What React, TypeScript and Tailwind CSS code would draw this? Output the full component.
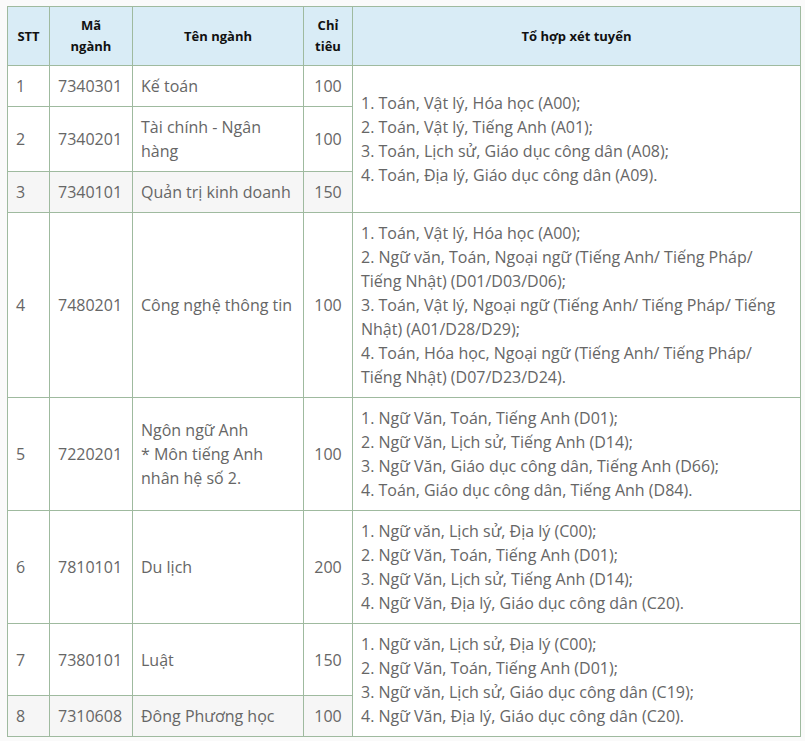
const rows = [
  { stt: "1", ma: "7340301", ten: ["Kế toán"], ct: "100" },
  { stt: "2", ma: "7340201", ten: ["Tài chính - Ngân hàng"], ct: "100" },
  { stt: "3", ma: "7340101", ten: ["Quản trị kinh doanh"], ct: "150", striped: true },
  { stt: "4", ma: "7480201", ten: ["Công nghệ thông tin"], ct: "100" },
  { stt: "5", ma: "7220201", ten: ["Ngôn ngữ Anh", "* Môn tiếng Anh nhân hệ số 2."], ct: "100" },
  { stt: "6", ma: "7810101", ten: ["Du lịch"], ct: "200" },
  { stt: "7", ma: "7380101", ten: ["Luật"], ct: "150", tall: true },
  { stt: "8", ma: "7310608", ten: ["Đông Phương học"], ct: "100", striped: true },
];

// tổ hợp: key = row index where the merged cell starts
const toHop: Record<number, { span: number; lines: string[] }> = {
  0: {
    span: 3,
    lines: [
      "1. Toán, Vật lý, Hóa học (A00);",
      "2. Toán, Vật lý, Tiếng Anh (A01);",
      "3. Toán, Lịch sử, Giáo dục công dân (A08);",
      "4. Toán, Địa lý, Giáo dục công dân (A09).",
    ],
  },
  3: {
    span: 1,
    lines: [
      "1. Toán, Vật lý, Hóa học (A00);",
      "2. Ngữ văn, Toán, Ngoại ngữ (Tiếng Anh/ Tiếng Pháp/ Tiếng Nhật) (D01/D03/D06);",
      "3. Toán, Vật lý, Ngoại ngữ (Tiếng Anh/ Tiếng Pháp/ Tiếng Nhật) (A01/D28/D29);",
      "4. Toán, Hóa học, Ngoại ngữ (Tiếng Anh/ Tiếng Pháp/ Tiếng Nhật) (D07/D23/D24).",
    ],
  },
  4: {
    span: 1,
    lines: [
      "1. Ngữ Văn, Toán, Tiếng Anh (D01);",
      "2. Ngữ Văn, Lịch sử, Tiếng Anh (D14);",
      "3. Ngữ Văn, Giáo dục công dân, Tiếng Anh (D66);",
      "4. Toán, Giáo dục công dân, Tiếng Anh (D84).",
    ],
  },
  5: {
    span: 1,
    lines: [
      "1. Ngữ văn, Lịch sử, Địa lý (C00);",
      "2. Ngữ Văn, Toán, Tiếng Anh (D01);",
      "3. Ngữ Văn, Lịch sử, Tiếng Anh (D14);",
      "4. Ngữ Văn, Địa lý, Giáo dục công dân (C20).",
    ],
  },
  6: {
    span: 2,
    lines: [
      "1. Ngữ văn, Lịch sử, Địa lý (C00);",
      "2. Ngữ Văn, Toán, Tiếng Anh (D01);",
      "3. Ngữ văn, Lịch sử, Giáo dục công dân (C19);",
      "4. Ngữ Văn, Địa lý, Giáo dục công dân (C20).",
    ],
  },
};

const cell = "border border-[#9fba9f] px-2 py-2 align-middle";

export default function App() {
  return (
    <div
      className="min-h-[741px] bg-[#fafafa] pl-[7px] pt-[6px]"
      style={{ fontFamily: "'Open Sans', Lato, sans-serif" }}
    >
      <table className="w-[794px] table-fixed border-collapse bg-white text-[16px] leading-6 text-[#666]">
        <colgroup>
          <col className="w-[42px]" />
          <col className="w-[83px]" />
          <col className="w-[171px]" />
          <col className="w-[49px]" />
          <col />
        </colgroup>
        <thead>
          <tr className="bg-[#d9ecf6] text-[13px] font-bold leading-[21px] text-[#111]">
            <th className={cell + " text-center"}>STT</th>
            <th className={cell + " text-center"}>
              Mã
              <br />
              ngành
            </th>
            <th className={cell + " text-center"}>Tên ngành</th>
            <th className={cell + " text-center"}>
              Chỉ
              <br />
              tiêu
            </th>
            <th className={cell + " text-center"}>Tổ hợp xét tuyển</th>
          </tr>
        </thead>
        <tbody>
          {rows.map((r, i) => {
            const bg = r.striped ? "bg-[#f6f6f6]" : "";
            const h = r.tall ? "h-[72px]" : "";
            const th = toHop[i];
            return (
              <tr key={r.stt}>
                <td className={`${cell} ${bg} ${h}`}>{r.stt}</td>
                <td className={`${cell} ${bg}`}>{r.ma}</td>
                <td className={`${cell} ${bg}`}>
                  {r.ten.map((t) => (
                    <div key={t}>{t}</div>
                  ))}
                </td>
                <td className={`${cell} ${bg} text-center`}>{r.ct}</td>
                {th && (
                  <td rowSpan={th.span} className={cell}>
                    {th.lines.map((l) => (
                      <div key={l}>{l}</div>
                    ))}
                  </td>
                )}
              </tr>
            );
          })}
        </tbody>
      </table>
    </div>
  );
}
